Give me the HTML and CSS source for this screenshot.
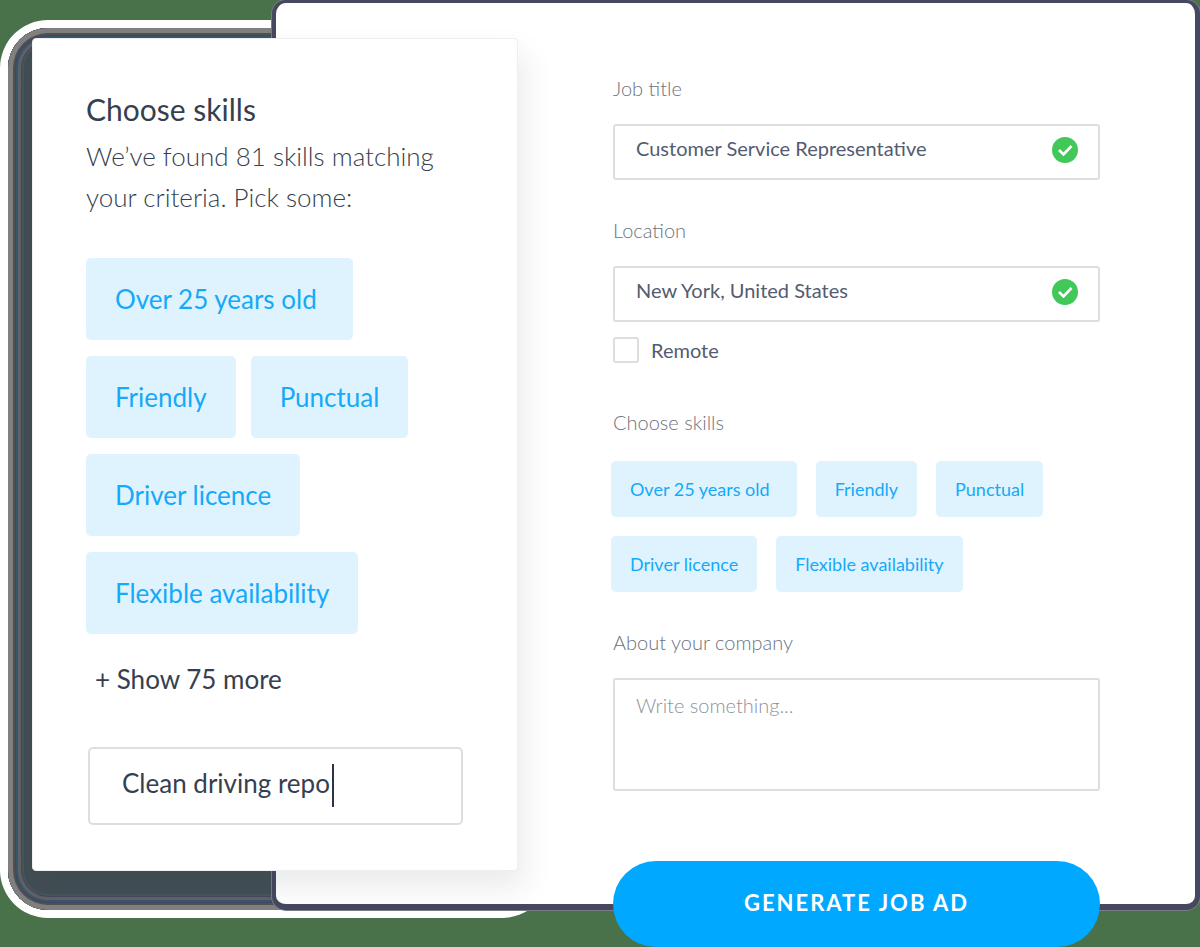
FILE: index.html
```html
<!DOCTYPE html>
<html lang="en">
<head>
    <meta charset="UTF-8">
    <meta name="viewport" content="width=device-width, initial-scale=1.0">
    <title>Job Ad Generator</title>
    <link rel="stylesheet" href="styles.css">
</head>
<body>
    <main class="stage">
        <div class="card-backdrop"></div>

        <section class="skills-card">
            <h2>Choose skills</h2>
            <p class="intro">We’ve found 81 skills matching your criteria. Pick some:</p>

            <div class="tags tags-large">
                <button type="button" class="tag tag-wide">Over 25 years old</button>
                <button type="button" class="tag">Friendly</button>
                <button type="button" class="tag">Punctual</button>
                <button type="button" class="tag">Driver licence</button>
                <button type="button" class="tag">Flexible availability</button>
            </div>

            <a href="#" class="show-more">+ Show 75 more</a>

            <div class="skill-field">
                <input type="text" class="skill-input" aria-label="Add a skill" value="Clean driving repo">
                <span class="caret"></span>
            </div>
        </section>

        <form class="job-form">
            <div class="form-group">
                <label for="job-title">Job title</label>
                <div class="field">
                    <input type="text" id="job-title" value="Customer Service Representative">
                    <svg class="check" viewBox="0 0 26 26" aria-hidden="true">
                        <circle cx="13" cy="13" r="13" fill="#42c858"/>
                        <path d="M7 13l4.500 4.500 8-8.500" fill="none" stroke="#fff" stroke-width="2.600"/>
                    </svg>
                </div>
            </div>

            <div class="form-group location-group">
                <label for="location">Location</label>
                <div class="field">
                    <input type="text" id="location" value="New York, United States">
                    <svg class="check" viewBox="0 0 26 26" aria-hidden="true">
                        <circle cx="13" cy="13" r="13" fill="#42c858"/>
                        <path d="M7 13l4.500 4.500 8-8.500" fill="none" stroke="#fff" stroke-width="2.600"/>
                    </svg>
                </div>
                <div class="remote">
                    <input type="checkbox" id="remote">
                    <label for="remote">Remote</label>
                </div>
            </div>

            <div class="form-group">
                <h3>Choose skills</h3>
                <div class="tags">
                    <button type="button" class="tag tag-wide">Over 25 years old</button>
                    <button type="button" class="tag">Friendly</button>
                    <button type="button" class="tag">Punctual</button>
                    <button type="button" class="tag">Driver licence</button>
                    <button type="button" class="tag">Flexible availability</button>
                </div>
            </div>

            <div class="form-group">
                <label for="about">About your company</label>
                <textarea id="about" placeholder="Write something..."></textarea>
            </div>

            <button type="submit" class="generate-button">GENERATE JOB AD</button>
        </form>
    </main>
</body>
</html>
```

FILE: styles.css
```css
* {
    box-sizing: border-box;
}

body {
    margin: 0;
    min-height: 100vh;
    background-color: #49724b;
    font-family: Lato, "Open Sans", sans-serif;
    color: #363f4f;
}

h2, h3, p {
    margin: 0;
}

button, input, textarea {
    font-family: inherit;
}

/* The card and the form share the middle column, so the card overlaps the form */
.stage {
    display: grid;
    grid-template-columns: 272px 246px 1fr;
    align-items: start;
}

.card-backdrop {
    grid-column: 1 / 3;
    grid-row: 1;
    align-self: stretch;
    margin: 28px -24px 0 8px;
    border-radius: 40px;
    background: #424e54;
    box-shadow:
        0 0 0 8px #fff,
        inset 0 0 0 5px #808080,
        inset 0 0 0 7px #515151,
        inset 0 0 0 8px #464563,
        inset 0 0 0 10px #34586e,
        inset 0 0 0 13px #626262,
        inset 0 0 0 14px #464563,
        inset 0 0 0 16px #48565a;
}

.skills-card {
    grid-column: 1 / 3;
    grid-row: 1;
    z-index: 2;
    margin: 38px 0 0 32px;
    padding: 50px 54px 45px 53px;
    border: 1px solid #eef0f0;
    border-radius: 4px;
    background: #fff;
    box-shadow: 6px 16px 30px rgba(40, 50, 60, 0.1);
}

.skills-card h2 {
    font-size: 30px;
    line-height: 40px;
    font-weight: 400;
}

.intro {
    margin-top: 7px;
    font-size: 26px;
    line-height: 41px;
    font-weight: 300;
}

.tags {
    display: flex;
    flex-wrap: wrap;
    gap: 19px;
    margin-left: -2px;
}

.tag {
    height: 56px;
    padding: 0 19px;
    border: none;
    border-radius: 5px;
    background: #dff3ff;
    color: #16a9f8;
    font-size: 18px;
    cursor: pointer;
}

.tag-wide {
    padding-right: 27px;
}

.tags-large {
    gap: 16px 15px;
    margin: 40px 0 0;
}

.tags-large .tag {
    height: 82px;
    padding: 0 29px;
    font-size: 26px;
}

.tags-large .tag-wide {
    padding-right: 36px;
}

.show-more {
    display: block;
    margin: 25px 0 0 9px;
    color: inherit;
    font-size: 26px;
    line-height: 40px;
    text-decoration: none;
}

.skill-field {
    position: relative;
    margin: 48px 0 0 2px;
}

.skill-input {
    display: block;
    width: 100%;
    height: 78px;
    padding: 0 32px 6px;
    border: 2px solid #dcdfdf;
    border-radius: 5px;
    background: #fff;
    color: inherit;
    font-size: 26px;
}

.caret {
    position: absolute;
    top: 17px;
    left: 244px;
    width: 2px;
    height: 43px;
    background: #2b3444;
}

.job-form {
    grid-column: 2 / 4;
    grid-row: 1;
    z-index: 1;
    padding: 69px 95px 0 337px;
    border: solid #454860;
    border-width: 3px 5px 6px 4px;
    border-radius: 14px;
    background: #fff;
    box-shadow: 0 0 0 1px #777d80;
}

.form-group {
    margin-bottom: 34px;
}

.location-group {
    margin-bottom: 43px;
}

.form-group > label, .form-group h3 {
    display: block;
    margin-bottom: 20px;
    color: #6d727d;
    font-size: 20px;
    line-height: 32px;
    font-weight: 300;
}

.form-group h3 {
    margin-bottom: 23px;
}

.field {
    position: relative;
}

.field input {
    display: block;
    width: 100%;
    height: 56px;
    padding: 0 60px 8px 21px;
    border: 2px solid #dcdfdf;
    border-radius: 3px;
    background: #fff;
    color: #535c70;
    font-size: 20px;
}

.check {
    position: absolute;
    top: 13px;
    right: 22px;
    width: 26px;
    height: 26px;
}

.remote {
    display: flex;
    align-items: center;
    gap: 12px;
    margin-top: 15px;
    color: #535c70;
    font-size: 20px;
    line-height: 26px;
}

.remote input {
    appearance: none;
    width: 26px;
    height: 26px;
    margin: 0;
    border: 2px solid #dcdfdf;
    border-radius: 3px;
    background: #fff;
}

.job-form textarea {
    display: block;
    width: 100%;
    height: 113px;
    padding: 13px 21px;
    border: 2px solid #dcdfdf;
    border-radius: 3px;
    color: #535c70;
    font-size: 20px;
    resize: none;
}

.job-form textarea::placeholder {
    color: #8d929b;
    font-weight: 300;
}

/* Hangs over the bottom edge of the form */
.generate-button {
    display: block;
    width: 100%;
    height: 86px;
    margin: 70px 0 -43px;
    padding-bottom: 4px;
    border: none;
    border-radius: 43px;
    background: #00a9ff;
    color: #fff;
    font-size: 22px;
    font-weight: 700;
    letter-spacing: 2px;
    cursor: pointer;
}
```
